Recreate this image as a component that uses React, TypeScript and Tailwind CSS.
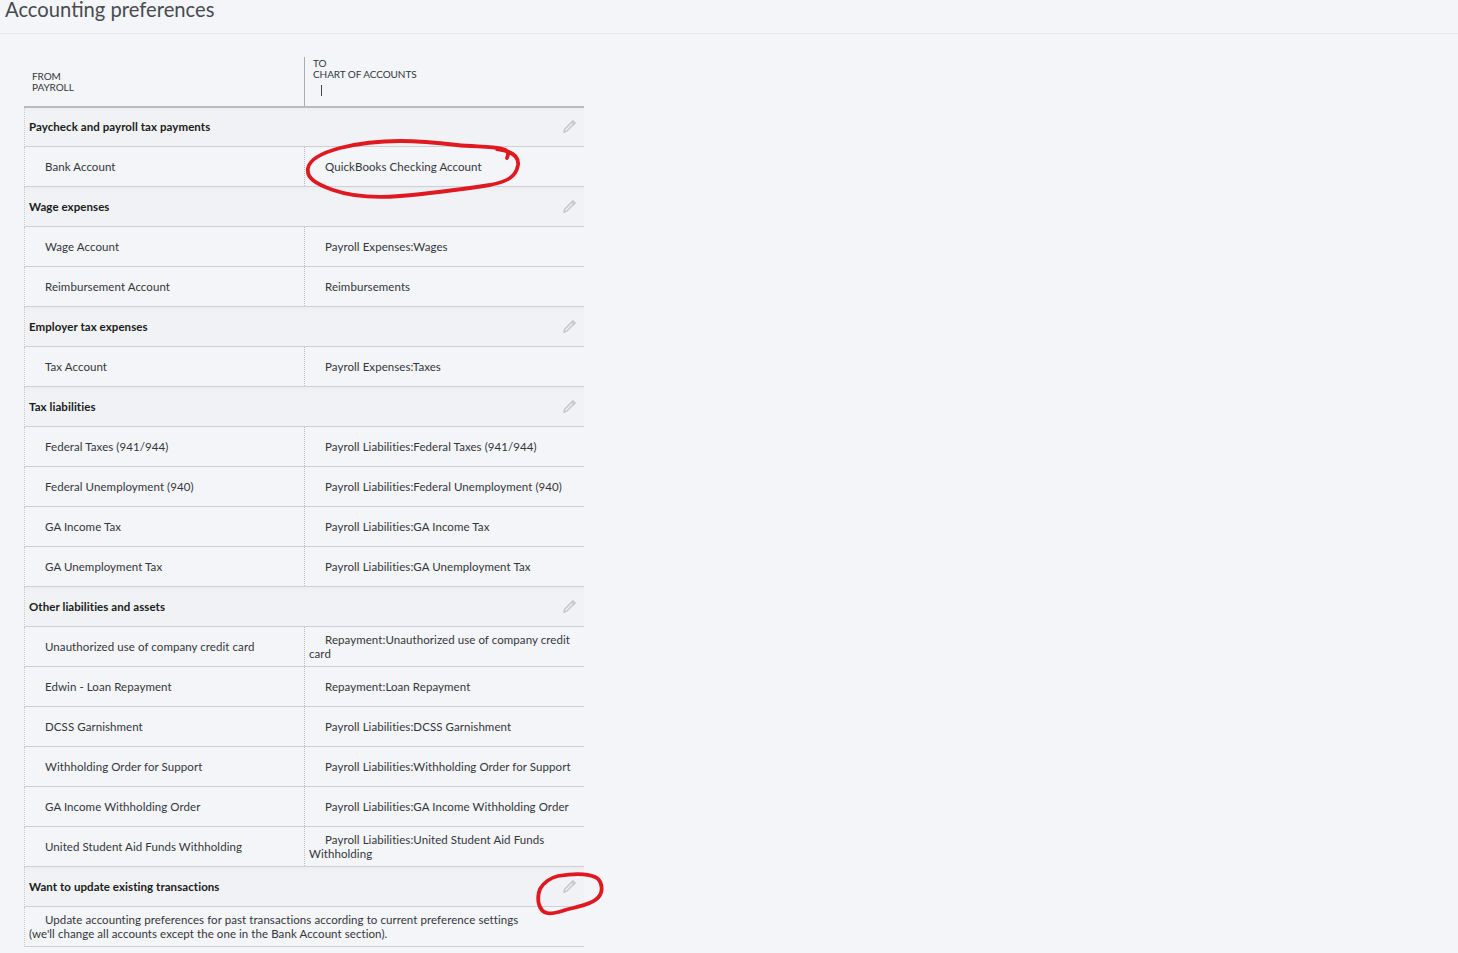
import { Fragment } from 'react';

type Row = { from: string; to: string };
type Section = { title: string; rows: Row[] };

const sections: Section[] = [
  {
    title: 'Paycheck and payroll tax payments',
    rows: [{ from: 'Bank Account', to: 'QuickBooks Checking Account' }],
  },
  {
    title: 'Wage expenses',
    rows: [
      { from: 'Wage Account', to: 'Payroll Expenses:Wages' },
      { from: 'Reimbursement Account', to: 'Reimbursements' },
    ],
  },
  {
    title: 'Employer tax expenses',
    rows: [{ from: 'Tax Account', to: 'Payroll Expenses:Taxes' }],
  },
  {
    title: 'Tax liabilities',
    rows: [
      { from: 'Federal Taxes (941/944)', to: 'Payroll Liabilities:Federal Taxes (941/944)' },
      { from: 'Federal Unemployment (940)', to: 'Payroll Liabilities:Federal Unemployment (940)' },
      { from: 'GA Income Tax', to: 'Payroll Liabilities:GA Income Tax' },
      { from: 'GA Unemployment Tax', to: 'Payroll Liabilities:GA Unemployment Tax' },
    ],
  },
  {
    title: 'Other liabilities and assets',
    rows: [
      { from: 'Unauthorized use of company credit card', to: 'Repayment:Unauthorized use of company credit card' },
      { from: 'Edwin - Loan Repayment', to: 'Repayment:Loan Repayment' },
      { from: 'DCSS Garnishment', to: 'Payroll Liabilities:DCSS Garnishment' },
      { from: 'Withholding Order for Support', to: 'Payroll Liabilities:Withholding Order for Support' },
      { from: 'GA Income Withholding Order', to: 'Payroll Liabilities:GA Income Withholding Order' },
      { from: 'United Student Aid Funds Withholding', to: 'Payroll Liabilities:United Student Aid Funds Withholding' },
    ],
  },
];

function Pencil() {
  return (
    <svg width="14" height="14" viewBox="0 0 16 16" className="mr-[8px] shrink-0 text-[#c8cacd]" fill="none" stroke="currentColor" strokeWidth="1.8" strokeLinejoin="round">
      <path d="M11.4 2.2 13.8 4.4 5.6 12.6 2 14 3.2 10.4Z" />
      <path d="M12.4 1 15 3.4 14 4.4 11.4 2Z" fill="currentColor" />
    </svg>
  );
}

function SectionRow({ title }: { title: string }) {
  return (
    <div className="flex h-10 items-center justify-between border-b border-l border-b-[#cdcfd2] border-l-[#c9cbce] bg-[#f1f2f5] bg-gradient-to-b from-[#ecedf0] to-[#f1f2f5] to-[5px] pl-1 pt-[1px] font-bold text-[#1a1c20] [border-left-style:dotted]">
      <span>{title}</span>
      <Pencil />
    </div>
  );
}

function AccountRow({ row }: { row: Row }) {
  return (
    <div className="flex h-10 border-b border-l border-b-[#cdcfd2] border-l-[#c9cbce] text-[#33363b] [border-left-style:dotted]">
      <div className="flex w-[279px] items-center pl-1 pt-[1px] indent-4">{row.from}</div>
      <div className="flex flex-1 items-center border-l border-dotted border-[#b9bbbf] pl-1 pt-[1px]">
        <p className="indent-4 leading-[14px]">{row.to}</p>
      </div>
    </div>
  );
}

export default function App() {
  return (
    <div className="relative h-[953px] w-[1458px] overflow-hidden bg-[#f4f5f9] font-['Lato',sans-serif] text-[11.5px] tracking-[0.07px]">
      <div className="h-[34px] border-b border-[#e8e9ed] pl-[5px]">
        <h1 className="text-[20.2px] leading-[18px] tracking-normal text-[#484b50]">Accounting preferences</h1>
      </div>

      <div className="ml-6 mt-[23px] w-[560px]">
        <div className="relative z-10 -mb-px flex h-[51px] border-b-2 border-[#b9bbbf] text-[10px] leading-[11px] tracking-[-0.08px] text-[#33363b]">
          <div className="flex w-[280px] flex-col justify-end pb-[13px] pl-2">
            <span>FROM</span>
            <span>PAYROLL</span>
          </div>
          <div className="border-l border-[#a9acb1] pl-2 pt-[1px]">
            <div>TO</div>
            <div>CHART OF ACCOUNTS</div>
            <div className="ml-2 mt-[5px] h-[11px] w-px bg-[#44474c]" />
          </div>
        </div>

        {sections.map((s) => (
          <Fragment key={s.title}>
            <SectionRow title={s.title} />
            {s.rows.map((r) => (
              <AccountRow key={r.from} row={r} />
            ))}
          </Fragment>
        ))}

        <SectionRow title="Want to update existing transactions" />
        <div className="flex h-10 items-center border-b border-l border-b-[#cdcfd2] border-l-[#c9cbce] pl-1 text-[#33363b] [border-left-style:dotted]">
          <p className="indent-4 leading-[14px]">
            Update accounting preferences for past transactions according to current preference settings
            <br />
            (we'll change all accounts except the one in the Bank Account section).
          </p>
        </div>
      </div>

      {/* red marker annotations */}
      <svg className="pointer-events-none absolute left-0 top-0" width="1458" height="953" fill="none" stroke="#e0181f" strokeWidth="3.8" strokeLinecap="round" strokeLinejoin="round">
        <path d="M507 158C509 154 508 150 503 149C490 146 475 147 457 145C440 143 420 141 400 141C380 141 360 143 340 148C325 152 310 158 308 168C306 178 316 184 333 190C350 196 375 198 400 196C425 194 457 190 490 185C505 182 516 178 518 165C519 156 512 151 497 149" />
        <path d="M540 889C544 882 550 878 558 876C570 874 586 873 595 877C602 880 603 890 600 895C596 902 585 905 573 908C563 910 553 915 547 913C539 911 536 900 540 889" />
      </svg>
    </div>
  );
}
